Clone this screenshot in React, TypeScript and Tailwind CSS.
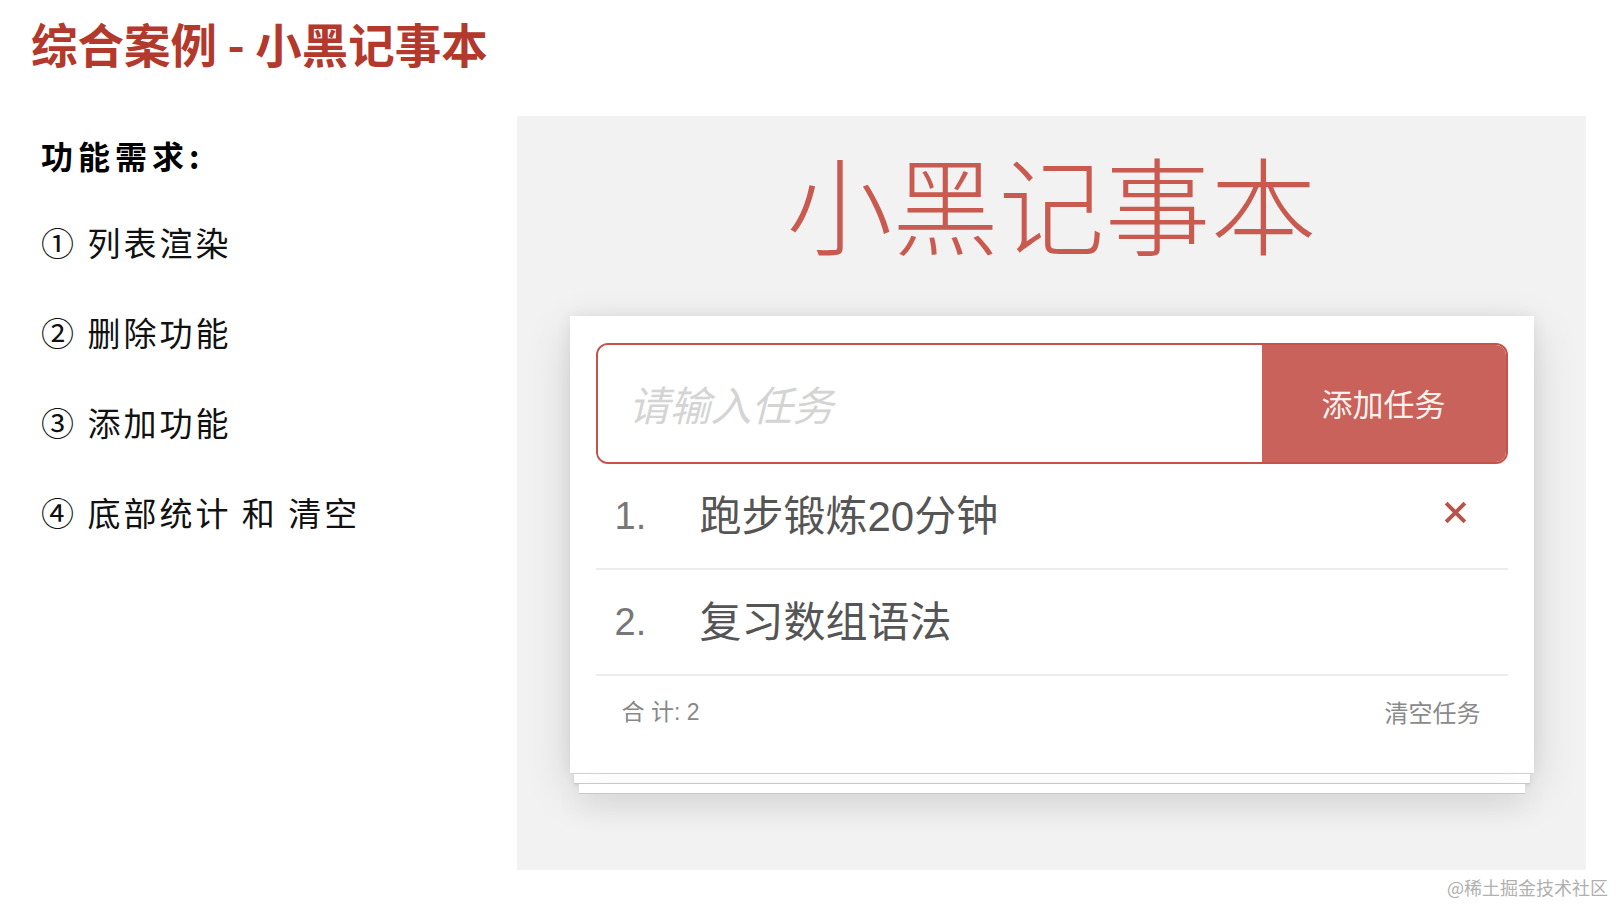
import React from 'react';

const CJK = '"Noto Sans CJK SC", sans-serif';
const MIX = '"Liberation Sans", "Noto Sans CJK SC", sans-serif';

const FEATURES = ['① 列表渲染', '② 删除功能', '③ 添加功能', '④ 底部统计 和 清空'];

const TODOS = [
    { id: 1, text: '跑步锻炼20分钟', showDelete: true },
    { id: 2, text: '复习数组语法', showDelete: false },
];

function TodoCard() {
    return (
        <div className="w-[964px] flex flex-col">
            {/* Main card */}
            <div className="bg-white pt-[27px] px-[26px] shadow-[0_16px_44px_rgba(0,0,0,0.14),0_0_14px_rgba(0,0,0,0.07)] border-b border-[#d4d4d4]">
                {/* Input row */}
                <div className="h-[121px] flex border-2 border-[#c5534a] rounded-[12px] overflow-hidden">
                    <div className="flex-1 flex items-center pl-[31px] bg-white">
                        <span className="text-[41px] italic text-[#d4d4d4]" style={{ fontFamily: CJK }}>
                            请输入任务
                        </span>
                    </div>
                    <button className="w-[244px] bg-[#c9625a] text-[#fdf2f0] text-[31px] flex items-center justify-center" style={{ fontFamily: CJK }}>
                        添加任务
                    </button>
                </div>

                {/* Todo list */}
                {TODOS.map((item, i) => (
                    <div key={item.id} className="h-[106px] flex items-center border-b-2 border-[#ececec] pl-[19px] pr-[40px]">
                        <span className="w-[85px] text-[38px] text-[#777]" style={{ fontFamily: MIX }}>
                            {i + 1}.
                        </span>
                        <span className="flex-1 text-[42px] text-[#555]" style={{ fontFamily: MIX }}>
                            {item.text}
                        </span>
                        {item.showDelete && (
                            <svg width="25" height="25" viewBox="0 0 24 24" className="-mt-[8px]">
                                <path d="M3 3 L21 21 M21 3 L3 21" stroke="#b5554d" strokeWidth="3.8" strokeLinecap="butt" />
                            </svg>
                        )}
                    </div>
                ))}

                {/* Footer */}
                <div className="h-[97px] flex items-start justify-between pt-[23px] pl-[26px] pr-[27px]">
                    <span className="text-[23px] leading-[26px] text-[#888]" style={{ fontFamily: MIX }}>
                        合 计: 2
                    </span>
                    <span className="text-[24px] leading-[26px] text-[#8a8a8a]" style={{ fontFamily: CJK }}>
                        清空任务
                    </span>
                </div>
            </div>

            {/* Stacked paper layers */}
            <div className="mx-[4px] h-[10px] bg-white border-b border-[#cccccc] shadow-[0_2px_4px_rgba(0,0,0,0.08)]" />
            <div className="mx-[9px] h-[10px] bg-white border-b border-[#c8c8c8] shadow-[0_10px_30px_rgba(0,0,0,0.12)]" />
        </div>
    );
}

export default function App() {
    return (
        <div className="w-[1615px] h-[905px] bg-white flex flex-col overflow-hidden">
            {/* Slide title */}
            <header className="h-[86px] flex items-center pl-[31px]">
                <h1 className="text-[46.5px] leading-none font-bold text-[#b2392c]" style={{ fontFamily: CJK }}>
                    综合案例 - 小黑记事本
                </h1>
            </header>

            <div className="mt-[30px] h-[754px] flex">
                {/* Requirements */}
                <div className="w-[517px] pl-[41px] flex flex-col">
                    <div className="h-[78px] flex items-center">
                        <h2 className="text-[32px] font-bold tracking-[5px] text-black" style={{ fontFamily: CJK }}>
                            功能需求:
                        </h2>
                    </div>
                    <ul className="mt-[4px] flex flex-col">
                        {FEATURES.map((f) => (
                            <li key={f} className="h-[90px] flex items-center text-[33px] tracking-[3px] text-[#111]" style={{ fontFamily: CJK }}>
                                {f}
                            </li>
                        ))}
                    </ul>
                </div>

                {/* Demo panel */}
                <div className="w-[1069px] bg-[#f2f2f2] flex flex-col items-center">
                    <div className="h-[200px] flex items-center justify-center pb-[30px]">
                        <span className="text-[106px] leading-none font-light text-[#c95a4f]" style={{ fontFamily: CJK }}>
                            小黑记事本
                        </span>
                    </div>
                    <TodoCard />
                </div>
            </div>

            {/* Watermark */}
            <div className="h-[35px] flex items-center justify-end pr-[7px]">
                <span className="text-[18px] text-[#b0b0b0]" style={{ fontFamily: CJK }}>
                    @稀土掘金技术社区
                </span>
            </div>
        </div>
    );
}
